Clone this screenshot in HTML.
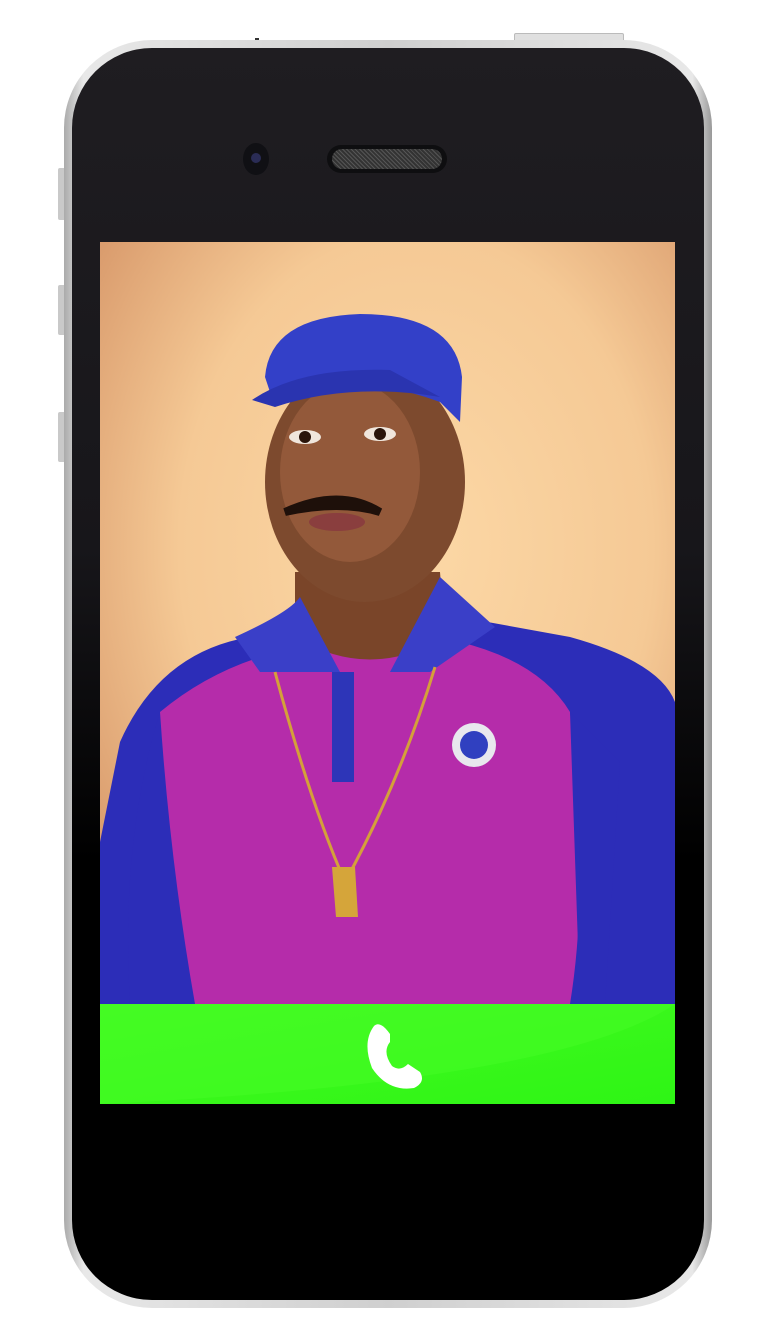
<!DOCTYPE html>
<html><head><meta charset="utf-8"><style>
html,body{margin:0;padding:0;background:#fff;width:780px;height:1344px;overflow:hidden}
.rim{position:absolute;left:64px;top:40px;width:648px;height:1268px;border-radius:88px;background:linear-gradient(90deg,#aaa,#e8e8e8 3%,#cfcfcf 50%,#e8e8e8 97%,#999);}
.body{position:absolute;left:72px;top:48px;width:632px;height:1252px;border-radius:80px;background:linear-gradient(180deg,#1f1d21 0%,#17161a 40%,#000 65%,#000 100%);}
.btn{position:absolute;background:#c9c9c9;}
</style></head><body>
<div class="btn" style="left:514px;top:33px;width:108px;height:8px;border-radius:2px;background:#e0e0e0;border:1px solid #bbb"></div>
<div class="btn" style="left:255px;top:38px;width:4px;height:10px;background:#333"></div>
<div class="btn" style="left:58px;top:168px;width:8px;height:52px;border-radius:2px"></div>
<div class="btn" style="left:58px;top:285px;width:8px;height:50px;border-radius:2px"></div>
<div class="btn" style="left:58px;top:412px;width:8px;height:50px;border-radius:2px"></div>
<div class="rim"></div>
<div class="body"></div>
<div style="position:absolute;left:243px;top:143px;width:26px;height:32px;border-radius:50%;background:#101014"></div>
<div style="position:absolute;left:251px;top:153px;width:10px;height:10px;border-radius:50%;background:#2a2c55"></div>
<div style="position:absolute;left:327px;top:145px;width:120px;height:28px;border-radius:14px;background:#0e0e10"></div>
<div style="position:absolute;left:332px;top:149px;width:110px;height:20px;border-radius:10px;background:repeating-linear-gradient(45deg,#555 0 1px,#333 1px 3px)"></div>
<svg style="position:absolute;left:100px;top:242px" width="575" height="862" viewBox="0 0 575 862">
<defs>
<radialGradient id="bg" cx="0.55" cy="0.4" r="0.75"><stop offset="0" stop-color="#fcd8a6"/><stop offset="0.55" stop-color="#f5c995"/><stop offset="1" stop-color="#d28f62"/></radialGradient>
<linearGradient id="gr" x1="0" y1="0" x2="1" y2="1"><stop offset="0" stop-color="#45fa22"/><stop offset="1" stop-color="#2ef515"/></linearGradient>
</defs>
<rect width="575" height="762" fill="url(#bg)"/>
<path d="M20 500 Q60 410 150 395 L200 380 L360 375 L470 395 Q560 420 575 460 L575 762 L0 762 L0 600 Z" fill="#2c2db8"/>
<path d="M60 470 Q120 420 200 405 L360 400 Q440 420 470 470 L480 762 L90 762 Q55 640 60 470Z" fill="#b52caa"/>
<path d="M60 470 Q70 620 95 762 L30 762 Q20 600 60 470Z" fill="#2c2db8"/>
<path d="M470 470 Q490 640 470 762 L505 762 L520 520Z" fill="#2c2db8"/>
<path d="M195 330 L340 330 L345 395 Q270 440 195 395Z" fill="#7a4529"/>
<path d="M135 395 Q190 370 200 355 L240 430 L160 430Z" fill="#3a3fc8"/>
<path d="M340 335 L395 385 L330 430 L290 430Z" fill="#3a3fc8"/>
<rect x="232" y="430" width="22" height="110" fill="#2d35b8"/>
<path d="M175 430 Q210 560 245 640 Q300 540 335 425" fill="none" stroke="#d4a03a" stroke-width="3"/>
<path d="M232 625 L255 625 L258 675 L236 675Z" fill="#d5a53a"/>
<circle cx="374" cy="503" r="22" fill="#e8e8ee"/><circle cx="374" cy="503" r="14" fill="#3040c0"/>
<ellipse cx="265" cy="240" rx="100" ry="120" fill="#7d4a2e"/>
<ellipse cx="250" cy="230" rx="70" ry="90" fill="#93593a"/>
<ellipse cx="205" cy="195" rx="16" ry="7" fill="#f0e6dc"/><circle cx="205" cy="195" r="6" fill="#2a140a"/>
<ellipse cx="280" cy="192" rx="16" ry="7" fill="#f0e6dc"/><circle cx="280" cy="192" r="6" fill="#2a140a"/>
<path d="M185 270 Q240 245 280 270 Q240 258 185 270Z" fill="#1e100a" stroke="#1e100a" stroke-width="8"/>
<ellipse cx="237" cy="280" rx="28" ry="9" fill="#8a3e3e"/>
<path d="M165 135 Q170 75 260 72 Q355 72 362 135 L360 180 L340 160 Q260 130 170 150Z" fill="#3340c8"/>
<path d="M152 158 Q200 125 290 128 L340 155 Q250 140 175 165Z" fill="#2a34b0"/>
<rect y="762" width="575" height="100" fill="url(#gr)"/>
<path d="M0 862 L0 762 L575 762 Q460 840 0 862Z" fill="#45fb24" opacity="0.6"/>
<path d="M274 784 Q262 800 272 826 Q288 850 314 846 Q326 840 320 830 L308 822 Q300 830 292 824 Q282 810 290 800 L290 792 Q280 778 274 784Z" fill="#fff"/>
</svg>
</body></html>
